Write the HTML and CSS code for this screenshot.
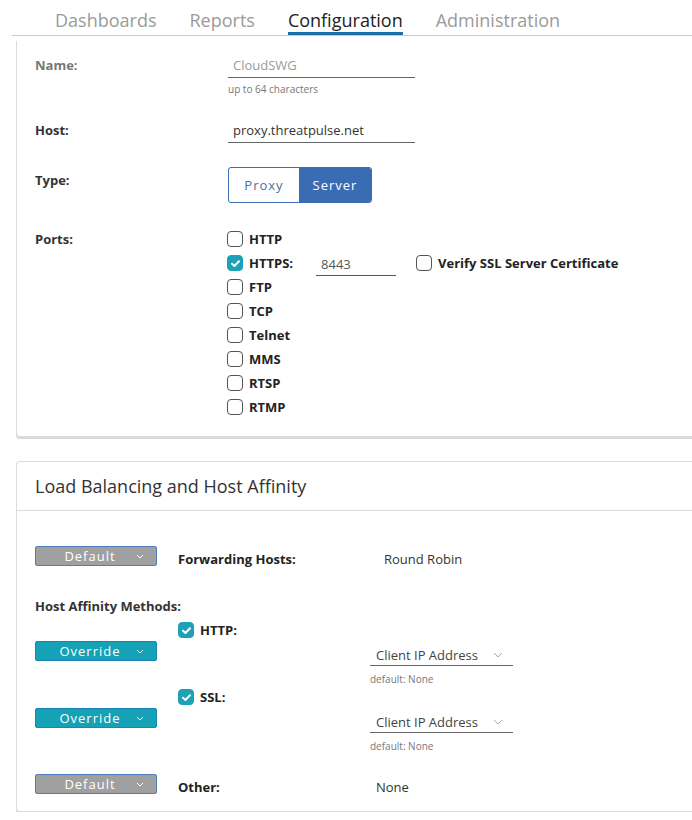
FILE: index.html
```html
<!DOCTYPE html>
<html>
<head>
<meta charset="utf-8">
<link rel="stylesheet" href="styles.css">
</head>
<body>
<nav class="tabs">
  <div class="tab">Dashboards</div>
  <div class="tab">Reports</div>
  <div class="tab active">Configuration</div>
  <div class="tab">Administration</div>
</nav>

<section class="card card-top">
  <div class="row row-name">
    <div class="label disabled">Name:</div>
    <div class="field">
      <div class="input disabled-input">CloudSWG</div>
      <div class="help">up to 64 characters</div>
    </div>
  </div>
  <div class="row row-host">
    <div class="label">Host:</div>
    <div class="field">
      <div class="input">proxy.threatpulse.net</div>
    </div>
  </div>
  <div class="row row-type">
    <div class="label">Type:</div>
    <div class="seg">
      <div class="seg-btn">Proxy</div>
      <div class="seg-btn on">Server</div>
    </div>
  </div>
  <div class="row row-ports">
    <div class="label">Ports:</div>
    <div class="checks">
      <div class="check"><span class="box"></span>HTTP</div>
      <div class="check https">
        <span class="box on"><svg viewBox="0 0 15 15" width="15" height="15"><polyline points="4,7.8 6.4,10 11,5.2" fill="none" stroke="#fff" stroke-width="2" stroke-linecap="round" stroke-linejoin="round"/></svg></span>HTTPS:
        <div class="port-input">8443</div>
        <span class="box"></span>Verify SSL Server Certificate
      </div>
      <div class="check"><span class="box"></span>FTP</div>
      <div class="check"><span class="box"></span>TCP</div>
      <div class="check"><span class="box"></span>Telnet</div>
      <div class="check"><span class="box"></span>MMS</div>
      <div class="check"><span class="box"></span>RTSP</div>
      <div class="check"><span class="box"></span>RTMP</div>
    </div>
  </div>
</section>

<section class="card card-lb">
  <header class="card-head">Load Balancing and Host Affinity</header>
  <div class="lb-body">
    <div class="lb-row row-fwd">
      <div class="btn grey"><span class="txt">Default</span><span class="chev"><svg viewBox="0 0 8 5" width="8" height="5"><polyline points="1,1 4,4 7,1" fill="none" stroke="#fff" stroke-width="1"/></svg></span></div>
      <div class="lb-label">Forwarding Hosts:</div>
      <div class="lb-value val-rr">Round Robin</div>
    </div>
    <div class="lb-title">Host Affinity Methods:</div>
    <div class="lb-row row-method">
      <div class="btn teal"><span class="txt">Override</span><span class="chev"><svg viewBox="0 0 8 5" width="8" height="5"><polyline points="1,1 4,4 7,1" fill="none" stroke="#fff" stroke-width="1"/></svg></span></div>
      <div class="lb-check"><span class="box on"><svg viewBox="0 0 15 15" width="15" height="15"><polyline points="4,7.8 6.4,10 11,5.2" fill="none" stroke="#fff" stroke-width="2" stroke-linecap="round" stroke-linejoin="round"/></svg></span>HTTP:</div>
      <div class="sel-wrap">
        <div class="select"><span>Client IP Address</span><svg viewBox="0 0 10 6" width="10" height="6"><polyline points="1,1 5,5 9,1" fill="none" stroke="#aaa" stroke-width="1"/></svg></div>
        <div class="help">default: None</div>
      </div>
    </div>
    <div class="lb-row row-method row-ssl">
      <div class="btn teal"><span class="txt">Override</span><span class="chev"><svg viewBox="0 0 8 5" width="8" height="5"><polyline points="1,1 4,4 7,1" fill="none" stroke="#fff" stroke-width="1"/></svg></span></div>
      <div class="lb-check"><span class="box on"><svg viewBox="0 0 15 15" width="15" height="15"><polyline points="4,7.8 6.4,10 11,5.2" fill="none" stroke="#fff" stroke-width="2" stroke-linecap="round" stroke-linejoin="round"/></svg></span>SSL:</div>
      <div class="sel-wrap">
        <div class="select"><span>Client IP Address</span><svg viewBox="0 0 10 6" width="10" height="6"><polyline points="1,1 5,5 9,1" fill="none" stroke="#aaa" stroke-width="1"/></svg></div>
        <div class="help">default: None</div>
      </div>
    </div>
    <div class="lb-row row-other">
      <div class="btn grey"><span class="txt">Default</span><span class="chev"><svg viewBox="0 0 8 5" width="8" height="5"><polyline points="1,1 4,4 7,1" fill="none" stroke="#fff" stroke-width="1"/></svg></span></div>
      <div class="lb-label">Other:</div>
      <div class="lb-value val-none">None</div>
    </div>
  </div>
</section>
</body>
</html>
```

FILE: styles.css
```css
* { box-sizing: border-box; }
body {
  margin: 0;
  background: #fff;
  font-family: "Open Sans", "Noto Sans", sans-serif;
  color: #333;
  overflow: hidden;
}

/* Tabs */
.tabs {
  display: flex;
  gap: 33px;
  margin-left: 12px;
  padding-left: 43px;
  border-bottom: 1px solid #c9c9c9;
}
.tab {
  font-size: 18px;
  line-height: 24px;
  padding-top: 8px;
  color: #9a9a9a;
  border-bottom: 3px solid transparent;
  height: 35px;
}
.tab.active {
  color: #222;
  border-bottom-color: #1b6fa8;
}

/* Cards */
.card {
  margin-left: 16px;
  background: #fff;
  border: 1px solid #dcdcdc;
  border-right: none;
}
.card-top {
  margin-top: 5px;
  border-top: none;
  border-bottom-left-radius: 4px;
  padding: 12px 0 17px 18px;
  box-shadow: 0 2px 0 #d9d9d9;
}

.row { display: flex; }
.label {
  width: 193px;
  flex: none;
  font-size: 13px;
  font-weight: 700;
  line-height: 24px;
  color: #333;
}
.label.disabled { color: #777; }

.input {
  width: 187px;
  height: 25px;
  border-bottom: 1px solid #666;
  font-size: 13px;
  line-height: 24px;
  padding-left: 5px;
  color: #333;
}
.disabled-input { color: #9a9a9a; }
.help {
  font-size: 10px;
  line-height: 14px;
  color: #777;
  margin-top: 4px;
}

.row-host { margin-top: 22px; }
.row-type { margin-top: 24px; }
.row-type .label { margin-top: 1px; }
.seg {
  display: flex;
  height: 36px;
  border: 1px solid #3a6cb4;
  border-radius: 3px;
  overflow: hidden;
}
.seg-btn {
  font-size: 13px;
  letter-spacing: 1px;
  line-height: 34px;
  color: #4d6f9e;
  width: 70px;
  text-align: center;
}
.seg-btn.on {
  background: #3a6cb4;
  color: #fff;
  width: 72px;
}

.row-ports { margin-top: 24px; }
.checks { display: flex; flex-direction: column; }
.check {
  display: flex;
  align-items: center;
  height: 24px;
  font-size: 13px;
  font-weight: 700;
  color: #222;
  margin-left: -1px;
}
.box {
  width: 16px;
  height: 16px;
  border: 1.5px solid #555;
  border-radius: 4px;
  margin-right: 6px;
  flex: none;
  display: flex;
  align-items: center;
  justify-content: center;
}
.box.on {
  background: #1da1b7;
  border-color: #1da1b7;
}
.box svg { flex: none; }
.port-input {
  width: 80px;
  height: 24px;
  margin-left: 23px;
  border-bottom: 1px solid #555;
  font-weight: 400;
  color: #555;
  padding-left: 5px;
  line-height: 24px;
  align-self: flex-start;
  position: relative;
  top: 1px;
  margin-right: 20px;
}

/* Load balancing card */
.card-lb {
  margin-top: 24px;
  border-top-left-radius: 4px;
  border-bottom-left-radius: 4px;
  box-shadow: 0 2px 0 #d9d9d9;
}
.card-head {
  height: 49px;
  font-size: 18px;
  line-height: 48px;
  padding-left: 18px;
  color: #333;
  border-bottom: 1px solid #dcdcdc;
}
.lb-body {
  padding: 35px 0 15px 18px;
}
.lb-row {
  display: grid;
  grid-template-columns: 143px 192px 1fr;
  align-items: start;
}
.btn {
  width: 122px;
  height: 20px;
  border: 1px solid #4e7dbe;
  border-radius: 2px;
  display: flex;
  align-items: center;
  padding-right: 10px;
  color: #fff;
  font-size: 13px;
  letter-spacing: 1px;
  line-height: 18px;
}
.btn .txt { flex: 1; text-align: center; padding-left: 10px; }
.btn .chev { width: 12px; display: flex; justify-content: center; }
.btn.grey { background: #a0a0a0; }
.btn.teal { background: #15a1b6; border-color: #1a84b8; }

.lb-label {
  font-size: 13px;
  font-weight: 700;
  line-height: 18px;
  margin-top: 4px;
  color: #222;
}
.lb-value {
  font-size: 13px;
  line-height: 18px;
  margin-top: 4px;
  color: #333;
}
.val-rr { padding-left: 14px; }
.val-none { padding-left: 6px; }

.lb-title {
  margin-top: 29px;
  font-size: 13px;
  font-weight: 700;
  line-height: 18px;
  color: #333;
}
.row-method { margin-top: 6px; }
.row-method .btn { margin-top: 20px; }
.row-ssl { margin-top: 2px; }
.lb-check {
  display: flex;
  align-items: center;
  height: 18px;
  font-size: 13px;
  font-weight: 700;
  color: #222;
}
.sel-wrap { margin-top: 24px; }
.select {
  width: 143px;
  height: 21px;
  border-bottom: 1px solid #666;
  display: flex;
  align-items: center;
  justify-content: space-between;
  padding: 0 10px 0 6px;
  font-size: 13px;
  color: #444;
}
.sel-wrap .help { margin-top: 6px; }
.row-other { margin-top: 21px; }
```
